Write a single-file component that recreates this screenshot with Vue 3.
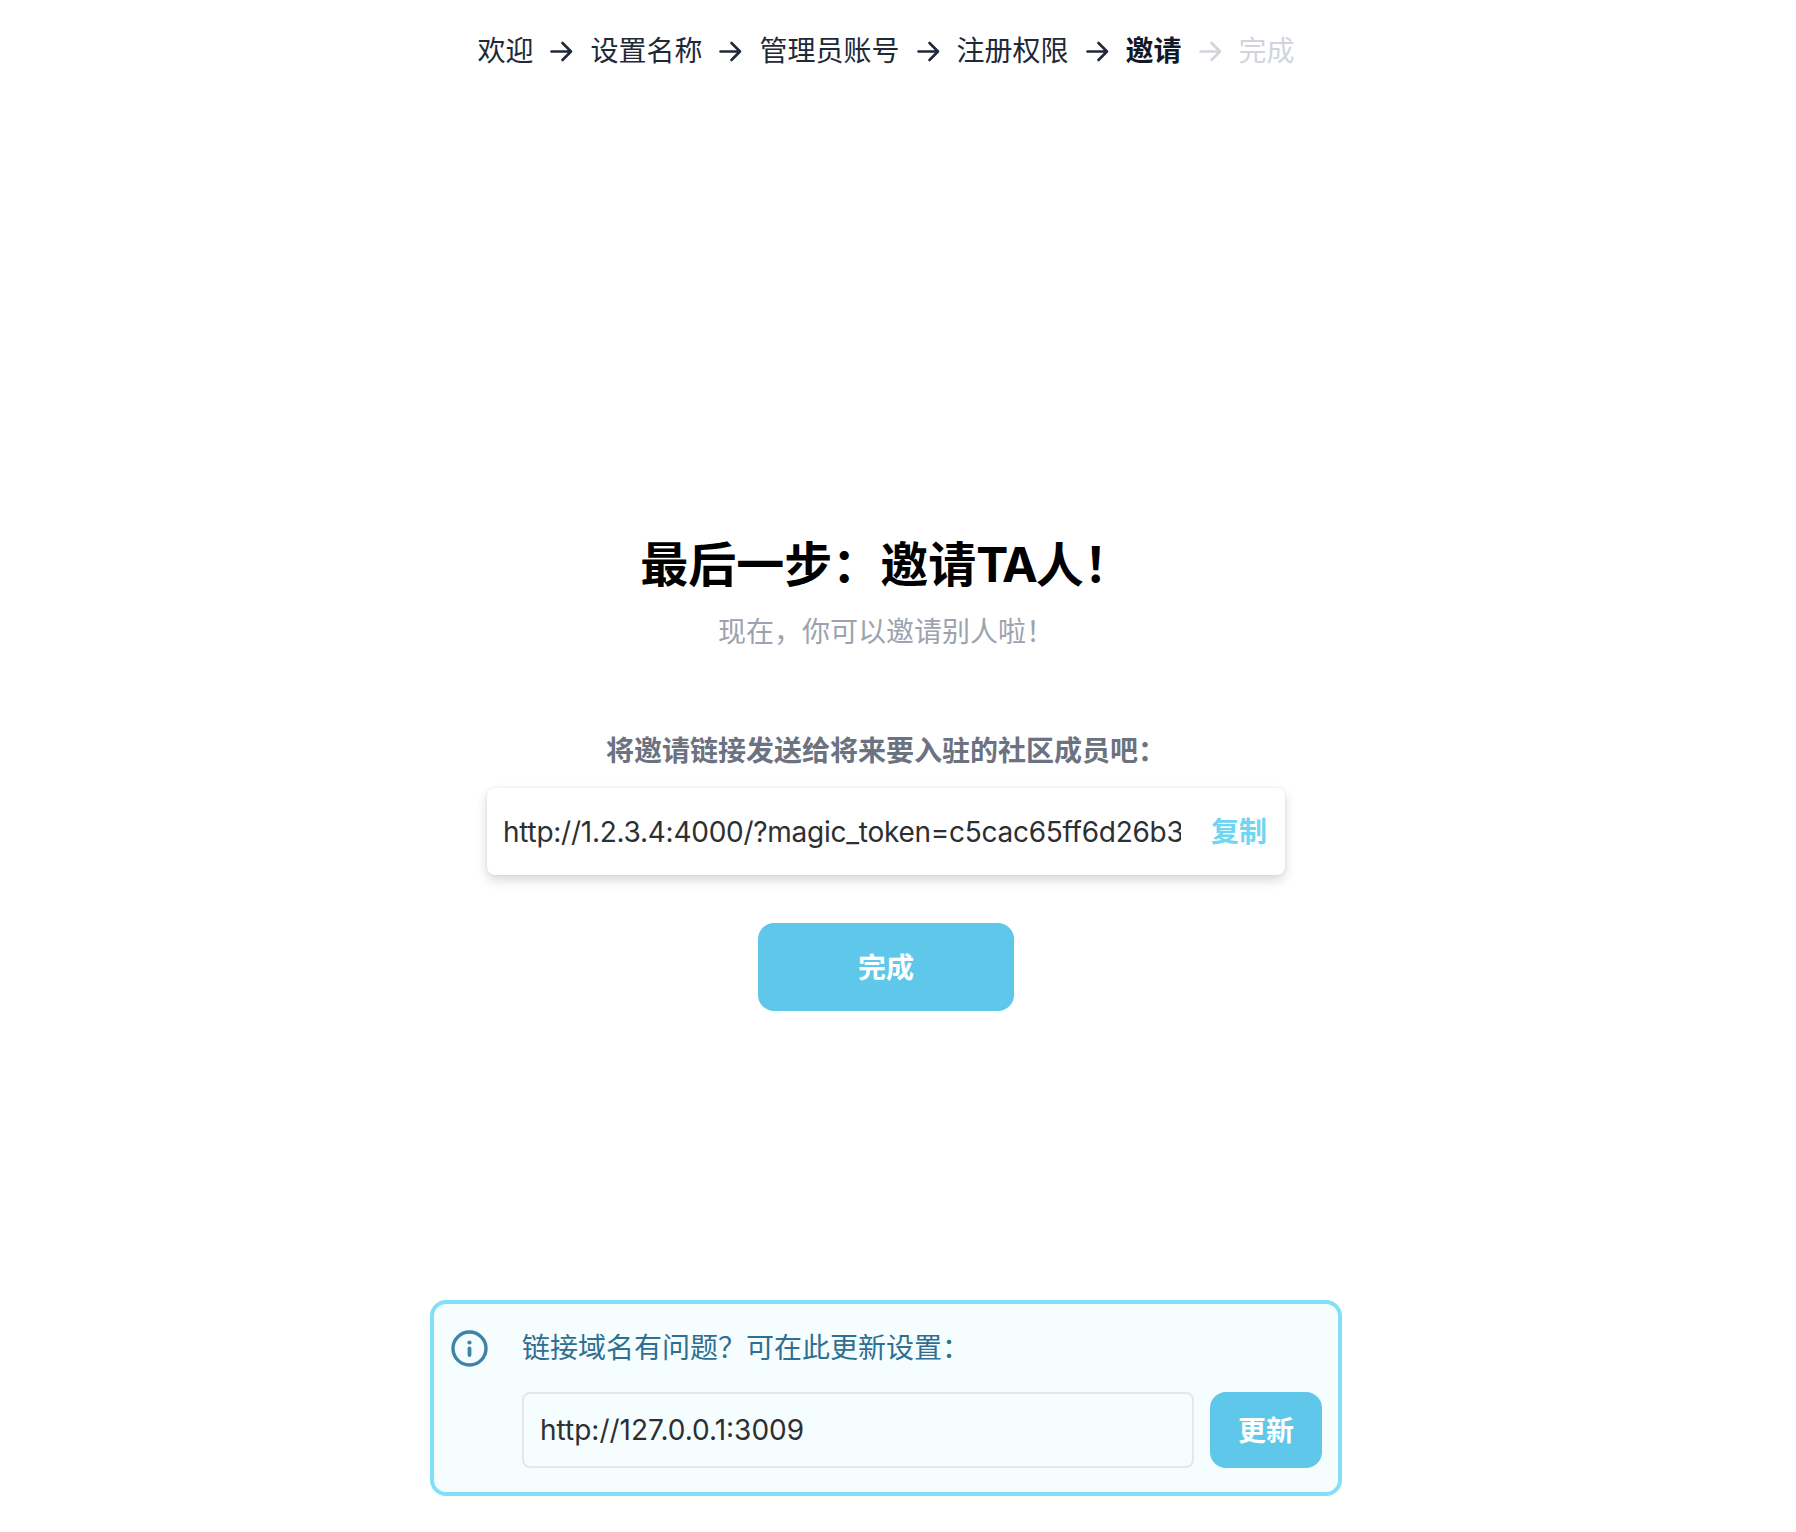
<template>
  <div class="page">
    <nav class="steps">
      <template v-for="(step, i) in steps" :key="step.label">
        <svg v-if="i > 0" class="arrow" :class="{ muted: step.state === 'todo' }" viewBox="0 0 27 27" fill="none">
          <path d="M3.5 13.5H23M14.5 5l8.5 8.5-8.5 8.5" stroke="currentColor" stroke-width="2.6" stroke-linecap="round" stroke-linejoin="round" />
        </svg>
        <span class="step" :class="step.state">{{ step.label }}</span>
      </template>
    </nav>

    <main class="content">
      <h1>最后一步：邀请<span class="ta">TA</span>人！</h1>
      <p class="sub">现在，你可以邀请别人啦！</p>
      <p class="label">将邀请链接发送给将来要入驻的社区成员吧：</p>
      <div class="link-card">
        <input class="link-input" readonly :value="inviteLink" />
        <button class="copy">复制</button>
      </div>
      <button class="finish">完成</button>
    </main>

    <section class="notice">
      <svg class="info" viewBox="0 0 37 37" fill="none">
        <circle cx="18.5" cy="18.5" r="16.5" stroke="currentColor" stroke-width="3.4" />
        <circle cx="18.5" cy="12.5" r="2.1" fill="currentColor" />
        <path d="M18.5 18.5v6.5" stroke="currentColor" stroke-width="3.8" stroke-linecap="round" />
      </svg>
      <div class="notice-body">
        <p class="notice-text">链接域名有问题？可在此更新设置：</p>
        <div class="notice-row">
          <input class="domain" v-model="domain" />
          <button class="update">更新</button>
        </div>
      </div>
    </section>
  </div>
</template>

<script setup>
import { ref } from 'vue';

const steps = [
  { label: '欢迎', state: 'done' },
  { label: '设置名称', state: 'done' },
  { label: '管理员账号', state: 'done' },
  { label: '注册权限', state: 'done' },
  { label: '邀请', state: 'current' },
  { label: '完成', state: 'todo' },
];

const inviteLink = 'http://1.2.3.4:4000/?magic_token=c5cac65ff6d26b3';
const domain = ref('http://127.0.0.1:3009');
</script>

<style>
html, body { margin: 0; background: #fff; }
</style>

<style scoped>
.page {
  height: 1532px;
  box-sizing: border-box;
  display: flex;
  flex-direction: column;
  align-items: center;
  /* the screenshot sits a bit left of the window's middle */
  padding: 32px 24px 36px 0;
  font-family: Inter, "Noto Sans CJK SC", sans-serif;
  background: #fff;
}
.steps {
  display: flex;
  align-items: center;
  gap: 15px;
  font-size: 28px;
  line-height: 38px;
  color: #1f2937;
}
.arrow { width: 27px; height: 27px; color: #1f2937; }
.arrow.muted { color: #d1d5db; }
.step.current { font-weight: 700; color: #111827; }
.step.todo { color: #d1d5db; }
.content {
  flex: 1;
  display: flex;
  flex-direction: column;
  align-items: center;
  width: 100%;
  padding-top: 465px;
}
h1 {
  margin: 0;
  font-size: 48px;
  line-height: 60px;
  font-weight: 700;
  color: #000;
}
.ta { letter-spacing: -2px; }
.sub {
  margin: 17px 0 0;
  font-size: 28px;
  line-height: 40px;
  color: #9ca3af;
}
.label {
  margin: 79px 0 0;
  font-size: 28px;
  line-height: 40px;
  font-weight: 600;
  color: #6b7280;
}
.link-card {
  margin-top: 17px;
  width: 798px;
  height: 87px;
  box-sizing: border-box;
  display: flex;
  align-items: center;
  padding: 0 18px 0 16px;
  gap: 30px;
  background: #fff;
  border-radius: 8px;
  box-shadow: 0 5px 12px rgba(0, 0, 0, 0.16), 0 0 3px rgba(0, 0, 0, 0.07);
}
.link-input {
  flex: 1;
  min-width: 0;
  border: 0;
  outline: 0;
  padding: 0;
  font: inherit;
  font-size: 28px;
  letter-spacing: -0.26px;
  color: #2d2f33;
  background: transparent;
}
.copy {
  border: 0;
  padding: 0 0 4px;
  background: none;
  font: inherit;
  font-size: 28px;
  font-weight: 600;
  color: #6fd6f2;
}
.finish {
  margin-top: 48px;
  width: 256px;
  height: 88px;
  border: 0;
  padding: 0 0 2px;
  border-radius: 16px;
  background: #5fc8ea;
  color: #fff;
  font: inherit;
  font-size: 28px;
  font-weight: 700;
}
.notice {
  width: 912px;
  height: 196px;
  flex: none;
  box-sizing: border-box;
  display: flex;
  gap: 34px;
  padding: 24px 16px 24px 17px;
  border: 4px solid #82e0f6;
  border-radius: 16px;
  background: #f6fdff;
}
.info { width: 37px; height: 37px; flex: none; margin-top: 2px; color: #3f83a6; }
.notice-body { flex: 1; min-width: 0; }
.notice-text {
  margin: 0;
  font-size: 28px;
  line-height: 40px;
  color: #2f6f92;
}
.notice-row {
  margin-top: 24px;
  display: flex;
  gap: 16px;
}
.domain {
  flex: 1;
  min-width: 0;
  height: 76px;
  box-sizing: border-box;
  padding: 0 16px;
  border: 2px solid #e5e7eb;
  border-radius: 8px;
  outline: 0;
  font: inherit;
  font-size: 28px;
  color: #2d2f33;
  background: transparent;
}
.update {
  width: 112px;
  height: 76px;
  border: 0;
  padding: 0 0 2px;
  border-radius: 16px;
  background: #5fc8ea;
  color: #fff;
  font: inherit;
  font-size: 28px;
  font-weight: 700;
}
</style>
